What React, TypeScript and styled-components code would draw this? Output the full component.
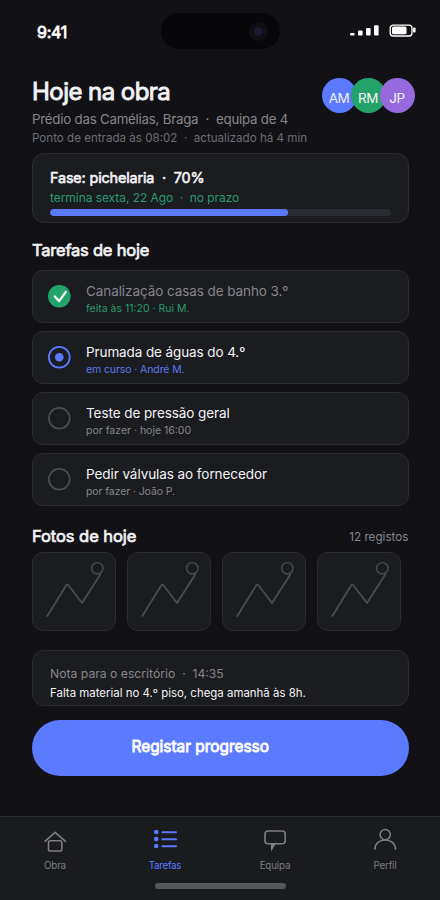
import React from 'react';
import styled, { createGlobalStyle, css } from 'styled-components';

const color = {
  bg: '#121216',
  card: '#1b1c20',
  line: '#2b2c30',
  text: '#f3f3f6',
  muted: '#86868c',
  dim: '#6c6d73',
  blue: '#5b7aff',
  green: '#24a26b',
  greenText: '#279a6d',
  purple: '#946ade',
};

const GlobalStyle = createGlobalStyle`
  * { box-sizing: border-box; }
  body { margin: 0; background: ${color.bg}; }
`;

const Screen = styled.div`
  width: 440px;
  height: 900px;
  display: flex;
  flex-direction: column;
  background: ${color.bg};
  color: ${color.text};
  font-family: Inter, 'Liberation Sans', sans-serif;
  overflow: hidden;
`;

const Text = styled.div<{ $size: number; $line: number; $color?: string; $track?: number; $heavy?: number }>`
  margin: 0;
  font-weight: 400;
  font-size: ${(p) => p.$size}px;
  line-height: ${(p) => p.$line}px;
  letter-spacing: ${(p) => p.$track ?? 0}px;
  color: ${(p) => p.$color ?? color.text};
  white-space: pre;
  ${(p) =>
    p.$heavy &&
    css`
      -webkit-text-stroke: ${p.$heavy}px currentColor;
    `}
`;

const StatusBar = styled.header`
  display: grid;
  grid-template-columns: 124px 119px 1fr;
  height: 77px;
  padding: 13px 24px 0 37px;
  align-items: start;
`;

const Clock = styled(Text)`
  margin-top: 9px;
`;

const Island = styled.div`
  height: 36px;
  border-radius: 18px;
  background: #070709;
  display: flex;
  align-items: center;
  justify-content: flex-end;
  padding-right: 12px;
`;

const Camera = styled.div`
  width: 19px;
  height: 19px;
  border-radius: 50%;
  border: 5px solid #101014;
  background: #191b30;
`;

const StatusIcons = styled.svg`
  justify-self: end;
  margin-top: 10px;
`;

const Main = styled.main`
  padding: 0 31.5px 0 32px;
`;

const Header = styled.section`
  display: flex;
  justify-content: space-between;
  height: 69px;
`;

const Intro = styled.div`
  display: flex;
  flex-direction: column;
  width: 280px;
`;

const Place = styled(Text)`
  margin-top: 2px;
`;

const Avatars = styled.div`
  display: flex;
  margin: 1px -6px 0 0;
`;

const Avatar = styled.div<{ $bg: string }>`
  width: 35px;
  height: 35px;
  border-radius: 50%;
  background: ${(p) => p.$bg};
  padding-top: 4px;
  text-align: center;
  & + & {
    margin-left: -6px;
  }
`;

const Card = styled.section`
  background: ${color.card};
  border: 1px solid ${color.line};
  border-radius: 12px;
  padding: 14px 17px 0;
`;

const PhaseCard = styled(Card)`
  margin-top: 7px;
  height: 70px;
`;

const NoteCard = styled(Card)`
  margin-top: 19px;
  height: 56px;
`;

const NoteBody = styled(Text)`
  margin-top: 1px;
`;

const Track = styled.div`
  margin-top: 2px;
  height: 6.5px;
  border-radius: 4px;
  background: #2b2c31;
  overflow: hidden;
`;

const Fill = styled.div`
  height: 100%;
  width: 70%;
  border-radius: 4px;
  background: ${color.blue};
`;

const SectionHead = styled.div<{ $top: number }>`
  display: flex;
  justify-content: space-between;
  margin-top: ${(p) => p.$top}px;
  height: 22px;
`;

const TaskList = styled.ul`
  list-style: none;
  margin: 9px 0 0;
  padding: 0;
  display: grid;
  gap: 8px;
`;

const TaskItem = styled.li`
  display: flex;
  height: 53px;
  padding: 11px 15px 0;
  background: ${color.card};
  border: 1px solid ${color.line};
  border-radius: 11px;
`;

const TaskIcon = styled.svg`
  flex: none;
  width: 24px;
  height: 24px;
  margin: 2px 15px 0 -1px;
`;

const Photos = styled.div`
  display: grid;
  grid-template-columns: repeat(4, 84px);
  gap: 11px;
  margin-top: 5px;
`;

const Photo = styled.div`
  height: 79px;
  background: ${color.card};
  border: 1px solid ${color.line};
  border-radius: 11px;
`;

const PrimaryButton = styled.button`
  display: block;
  width: 100%;
  height: 55.5px;
  margin-top: 14px;
  padding: 0 40px 2px 0;
  border: 0;
  border-radius: 28px;
  background: ${color.blue};
  font-family: inherit;
  text-align: center;
`;

const TabBar = styled.footer`
  margin-top: auto;
  height: 84px;
  background: #1a1b1f;
  border-top: 1px solid ${color.line};
`;

const Tabs = styled.nav`
  display: grid;
  grid-template-columns: repeat(4, 1fr);
  height: 66px;
`;

const Tab = styled.div<{ $color: string }>`
  display: flex;
  flex-direction: column;
  align-items: center;
  color: ${(p) => p.$color};
  svg {
    margin: 9px 0 8px;
  }
`;

const HomeIndicator = styled.div`
  width: 131px;
  height: 5.5px;
  margin: 0 auto;
  border-radius: 3px;
  background: #56575b;
`;

type State = 'done' | 'active' | 'todo';

const tasks: { title: string; note: string; state: State; track: number; noteTrack: number }[] = [
  { title: 'Canalização casas de banho 3.º', note: 'feita às 11:20 · Rui M.', state: 'done', track: -0.08, noteTrack: 0 },
  { title: 'Prumada de águas do 4.º', note: 'em curso · André M.', state: 'active', track: -0.1, noteTrack: -0.1 },
  { title: 'Teste de pressão geral', note: 'por fazer · hoje 16:00', state: 'todo', track: -0.07, noteTrack: 0 },
  { title: 'Pedir válvulas ao fornecedor', note: 'por fazer · João P.', state: 'todo', track: -0.07, noteTrack: -0.1 },
];

const noteColor: Record<State, string> = { done: color.greenText, active: '#5f79ea', todo: color.muted };

function StateIcon({ state }: { state: State }) {
  return (
    <TaskIcon viewBox="0 0 24 24" fill="none">
      {state === 'done' && (
        <>
          <circle cx="12.3" cy="12.2" r="11.3" fill={color.green} />
          <path d="M7.8 12.4 12.2 17.2 18.8 7.8" stroke="#fff" strokeWidth="2.2" strokeLinecap="round" strokeLinejoin="round" />
        </>
      )}
      {state === 'active' && (
        <>
          <circle cx="12.3" cy="12.2" r="10.4" stroke={color.blue} strokeWidth="1.8" />
          <circle cx="12.3" cy="12.2" r="4.3" fill={color.blue} />
        </>
      )}
      {state === 'todo' && <circle cx="12.3" cy="12.2" r="10.4" stroke="#4b4c50" strokeWidth="1.8" />}
    </TaskIcon>
  );
}

const tabs = [
  {
    label: 'Obra',
    track: -0.2,
    icon: (
      <>
        <path d="M5 15.3 15.2 6.3 25.5 15.3" />
        <rect x="8.5" y="14.7" width="13.3" height="10.3" rx="1.8" />
      </>
    ),
  },
  {
    label: 'Tarefas',
    track: -0.3,
    icon: (
      <>
        <g fill="currentColor" stroke="none">
          <circle cx="6.2" cy="6" r="2.3" />
          <circle cx="6.2" cy="13" r="2.3" />
          <circle cx="6.2" cy="20" r="2.3" />
        </g>
        <path d="M12.4 6.2H26M12.4 13.2H26M12.4 20.2H26" strokeWidth="1.9" />
      </>
    ),
  },
  {
    label: 'Equipa',
    track: -0.15,
    icon: (
      <>
        <rect x="5" y="5" width="20.2" height="12.7" rx="3" />
        <path d="M10.8 18h4.8l-4.4 7.6z" fill="currentColor" stroke="none" />
      </>
    ),
  },
  {
    label: 'Perfil',
    track: -0.2,
    icon: (
      <>
        <circle cx="15.2" cy="8.6" r="5.1" />
        <path d="M4.9 23C5.2 17.4 9.4 14 15.2 14S25.2 17.4 25.5 23" />
      </>
    ),
  },
];

export default function App() {
  return (
    <Screen>
      <GlobalStyle />
      <StatusBar>
        <Clock $size={16} $line={20} $heavy={0.8} $track={-0.25} $color="#fff">
          9:41
        </Clock>
        <Island>
          <Camera />
        </Island>
        <StatusIcons width="67" height="14" viewBox="0 0 67 14">
          <g fill="#fff">
            <rect x="1" y="10" width="4.6" height="2.5" rx="1" />
            <rect x="9" y="7.4" width="4.6" height="5.1" rx="1" />
            <rect x="17" y="5" width="4.6" height="7.5" rx="1" />
            <rect x="25" y="2.2" width="4.6" height="10.3" rx="1" />
            <rect x="43" y="3.6" width="14.5" height="7.6" rx="1.5" />
            <rect x="64" y="4.6" width="2.6" height="4.8" rx="1" />
          </g>
          <rect x="41.2" y="2.2" width="21.8" height="10.8" rx="3" fill="none" stroke="#fff" strokeWidth="1.3" />
        </StatusIcons>
      </StatusBar>

      <Main>
        <Header>
          <Intro>
            <Text as="h1" $size={24} $line={29} $heavy={0.9} $track={-0.55}>
              Hoje na obra
            </Text>
            <Place $size={13.3} $line={22} $track={-0.23} $color={color.muted}>
              {'Prédio das Camélias, Braga  ·  equipa de 4'}
            </Place>
            <Text $size={11.6} $line={16} $color={color.dim}>
              {'Ponto de entrada às 08:02  ·  actualizado há 4 min'}
            </Text>
          </Intro>
          <Avatars>
            {[
              ['AM', color.blue],
              ['RM', color.green],
              ['JP', color.purple],
            ].map(([name, bg]) => (
              <Avatar key={name} $bg={bg}>
                <Text $size={13.5} $line={32} $track={-0.4}>
                  {name}
                </Text>
              </Avatar>
            ))}
          </Avatars>
        </Header>

        <PhaseCard>
          <Text $size={14.4} $line={20} $heavy={0.6} $track={-0.15}>
            {'Fase: pichelaria  ·  70%'}
          </Text>
          <Text $size={12} $line={19} $track={-0.06} $color={color.greenText}>
            {'termina sexta, 22 Ago  ·  no prazo'}
          </Text>
          <Track>
            <Fill />
          </Track>
        </PhaseCard>

        <SectionHead $top={16}>
          <Text as="h2" $size={16.5} $line={22} $heavy={0.7} $track={-0.22}>
            Tarefas de hoje
          </Text>
        </SectionHead>
        <TaskList>
          {tasks.map((t) => (
            <TaskItem key={t.title}>
              <StateIcon state={t.state} />
              <div>
                <Text $size={13.5} $line={18} $track={t.track} $color={t.state === 'done' ? color.muted : color.text}>
                  {t.title}
                </Text>
                <Text $size={10.5} $line={17} $track={t.noteTrack} $color={noteColor[t.state]}>
                  {t.note}
                </Text>
              </div>
            </TaskItem>
          ))}
        </TaskList>

        <SectionHead $top={19}>
          <Text as="h2" $size={16.5} $line={22} $heavy={0.7} $track={-0.06}>
            Fotos de hoje
          </Text>
          <Text $size={11.7} $line={25} $color={color.muted}>
            12 registos
          </Text>
        </SectionHead>
        <Photos>
          {[1, 2, 3, 4].map((n) => (
            <Photo key={n}>
              <svg width="82" height="77" viewBox="0 0 82 77" fill="none" stroke="#4b4c50">
                <path d="M14.3 63 33.6 31.7H35L49 50 67.3 21.5" strokeWidth="1.8" strokeLinecap="round" strokeLinejoin="round" />
                <circle cx="64.3" cy="15.3" r="5.7" strokeWidth="1.4" />
              </svg>
            </Photo>
          ))}
        </Photos>

        <NoteCard>
          <Text $size={12.2} $line={18} $color={color.muted}>
            {'Nota para o escritório  ·  14:35'}
          </Text>
          <NoteBody $size={11.45} $line={18}>
            Falta material no 4.º piso, chega amanhã às 8h.
          </NoteBody>
        </NoteCard>

        <PrimaryButton>
          <Text $size={15.4} $line={20} $heavy={0.8} $color="#fff">
            Registar progresso
          </Text>
        </PrimaryButton>
      </Main>

      <TabBar>
        <Tabs>
          {tabs.map((t) => (
            <Tab key={t.label} $color={t.label === 'Tarefas' ? color.blue : '#7d7e83'}>
              <svg width="30" height="26" viewBox="0 0 30 26" fill="none" stroke="currentColor" strokeWidth="1.6" strokeLinecap="round" strokeLinejoin="round">
                {t.icon}
              </svg>
              <Text $size={9.8} $line={12} $track={t.track} $color="inherit">
                {t.label}
              </Text>
            </Tab>
          ))}
        </Tabs>
        <HomeIndicator />
      </TabBar>
    </Screen>
  );
}
